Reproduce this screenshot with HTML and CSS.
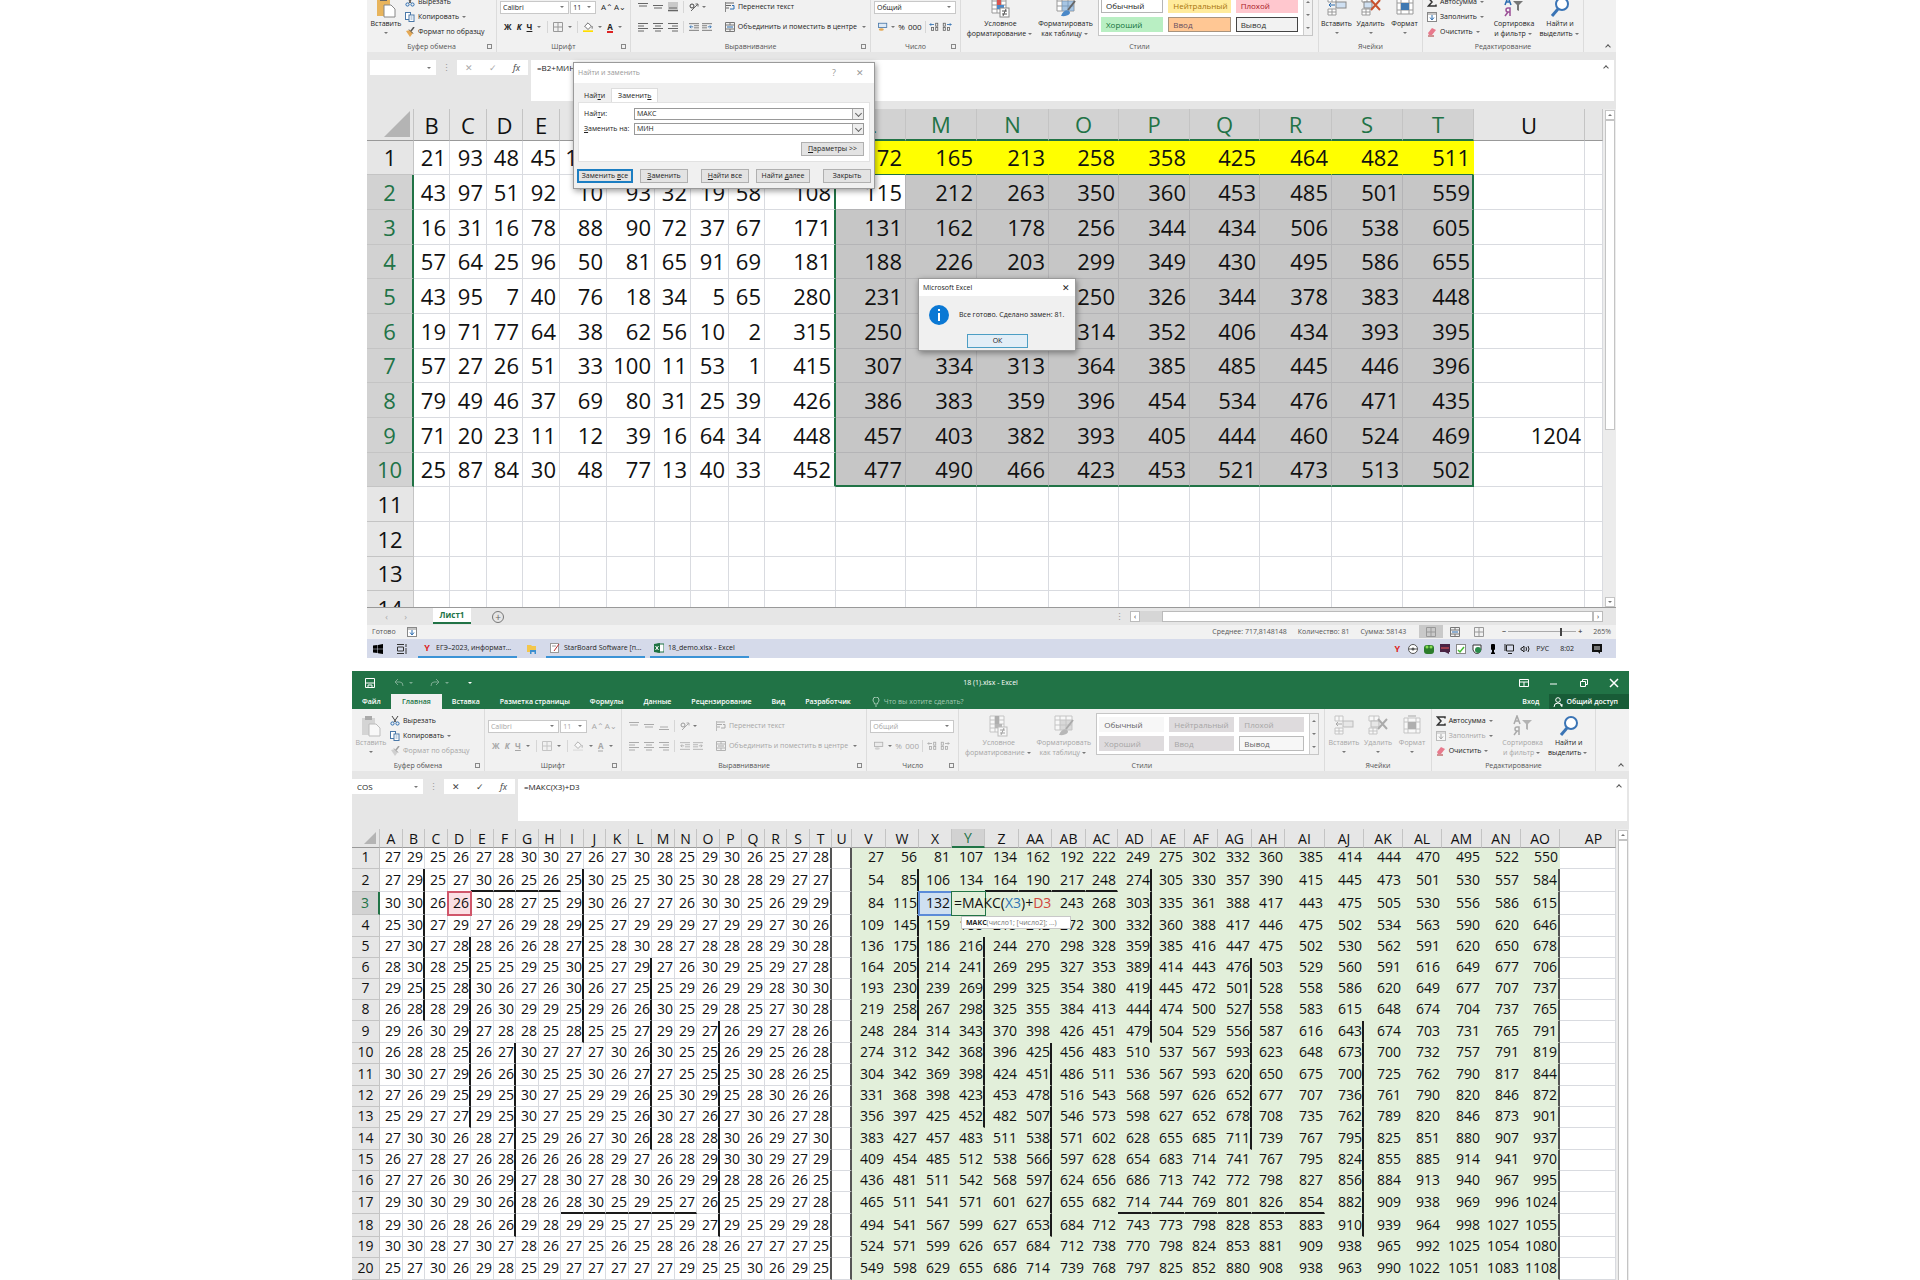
FILE: index.html
```html
<!DOCTYPE html>
<html lang="ru">
<head>
<meta charset="utf-8">
<title>18 (1).xlsx - Excel</title>
<link rel="stylesheet" href="styles.css">
</head>
<body>
<svg class="defs" aria-hidden="true">
  <symbol id="paste" viewBox="0 0 20 22"><rect x="1" y="3" width="13" height="17" fill="#e8b45c"/><rect x="4" y="1" width="7" height="4" fill="#666"/><path d="M8 9h7l4 4v8H8z" fill="#fff" stroke="#888"/></symbol>
  <symbol id="cut" viewBox="0 0 10 10"><path d="M2 0l4 6M8 0L4 6" stroke="#444" fill="none"/><circle cx="2.500" cy="7.500" r="1.600" fill="none" stroke="#2b6cb0"/><circle cx="7.500" cy="7.500" r="1.600" fill="none" stroke="#2b6cb0"/></symbol>
  <symbol id="copy" viewBox="0 0 10 10"><rect x=".5" y=".5" width="5" height="7" fill="#fff" stroke="#4a78a8"/><rect x="4" y="3" width="5" height="6.500" fill="#fff" stroke="#4a78a8"/><path d="M5.500 5h2M5.500 7h2" stroke="#4a78a8" stroke-width=".7"/></symbol>
  <symbol id="brush" viewBox="0 0 10 10"><path d="M9 0L6 4" stroke="#555" stroke-width="1.500"/><path d="M1 4l4-1 3 3-3 4z" fill="#e5a955"/><path d="M4 2.500l4 4" stroke="#555"/></symbol>
  <symbol id="left" viewBox="0 0 10 10"><path d="M0 1.500h10M0 4h6M0 6.500h10M0 9h6" stroke="#666"/></symbol>
  <symbol id="center" viewBox="0 0 10 10"><path d="M0 1.500h10M2 4h6M0 6.500h10M2 9h6" stroke="#666"/></symbol>
  <symbol id="right" viewBox="0 0 10 10"><path d="M0 1.500h10M4 4h6M0 6.500h10M4 9h6" stroke="#666"/></symbol>
  <symbol id="top" viewBox="0 0 10 10"><path d="M0 1.500h10M1 4h8" stroke="#666"/></symbol>
  <symbol id="mid" viewBox="0 0 10 10"><path d="M0 3.500h10M1 6h8" stroke="#666"/></symbol>
  <symbol id="bot" viewBox="0 0 10 10"><path d="M1 6h8M0 8.500h10" stroke="#666"/></symbol>
  <symbol id="orient" viewBox="0 0 10 10"><path d="M2 9L9 2M6.500 2H9v2.500" stroke="#666" fill="none"/><circle cx="3" cy="4" r="2" fill="none" stroke="#444"/></symbol>
  <symbol id="indent" viewBox="0 0 12 10"><path d="M0 1h12M6 3.500h6M6 6h6M0 9h12" stroke="#666"/><path d="M5 4.800H1M2.500 3L1 4.800l1.500 1.700" stroke="#2b6cb0" fill="none"/></symbol>
  <symbol id="wrap" viewBox="0 0 10 10"><path d="M0 1h9M0 3.500h6M0 6h4" stroke="#666"/><path d="M7 3.500h2V7H5" stroke="#2b6cb0" fill="none"/><path d="M.5 0v10" stroke="#888"/></symbol>
  <symbol id="merge" viewBox="0 0 10 10"><path d="M.5.5h9v9h-9zM.5 3h9M.5 7h9M5 .5V3M5 7v2.500" stroke="#777" fill="none"/><path d="M2 5h6" stroke="#2b6cb0"/></symbol>
  <symbol id="grid" viewBox="0 0 10 10"><path d="M.5.5h9v9h-9zM5 .5v9M.5 5h9" stroke="#999" fill="none"/></symbol>
  <symbol id="fill" viewBox="0 0 12 12"><path d="M2 5l4-4 4 4-4 4z" fill="#fff" stroke="#555"/><path d="M11 5v3" stroke="#555"/><rect y="10" width="12" height="2" fill="#fd0"/></symbol>
  <symbol id="money" viewBox="0 0 12 10"><rect x=".5" y=".5" width="10" height="5" fill="#dde9f5" stroke="#4a78a8"/><ellipse cx="4" cy="8" rx="3" ry="1.500" fill="#e5a955"/></symbol>
  <symbol id="dec" viewBox="0 0 12 10"><path d="M6 2H1M2.500.5L1 2l1.500 1.500" stroke="#2b6cb0" fill="none"/><rect x="8" y=".5" width="2.500" height="3.500" fill="none" stroke="#666"/><rect x="3" y="5.500" width="2.500" height="3.500" fill="none" stroke="#666"/><rect x="8" y="5.500" width="2.500" height="3.500" fill="none" stroke="#666"/></symbol>
  <symbol id="cond" viewBox="0 0 20 22"><path d="M1 1h14v16H1zM1 5h14M1 9h14M1 13h14M6 1v16M10 1v16" fill="#fff" stroke="#999"/><rect x="6" y="1" width="4" height="8" fill="#d9534f"/><rect x="6" y="9" width="7" height="4" fill="#4a88c8"/><rect x="9" y="12" width="9" height="9" fill="#fff" stroke="#888"/><path d="M11 15h5M11 18h5M15 13l-3 7" stroke="#555"/></symbol>
  <symbol id="ftable" viewBox="0 0 20 22"><path d="M1 1h17v14H1zM1 5h17M1 10h17M6 1v14M12 1v14" fill="#fff" stroke="#999"/><path d="M6 5h12v10H6z" fill="#6d9fd0" opacity=".6"/><path d="M19 5l-7 9" stroke="#666" stroke-width="2"/><path d="M5 20c2-5 5-7 8-5s-1 6-8 5z" fill="#4a88c8"/></symbol>
  <symbol id="ins" viewBox="0 0 20 20"><path d="M1 1h8v5H1zM1 13h8v6H1zM5 1v5M5 13v6M1 16h8" fill="#fff" stroke="#999"/><rect x="9" y="6" width="10" height="6" fill="#cfe0f2" stroke="#888"/><path d="M8 9H2M4 7L2 9l2 2" stroke="#2b6cb0" fill="none"/></symbol>
  <symbol id="del" viewBox="0 0 20 20"><path d="M1 1h10v5H1zM1 13h8v6H1zM6 1v5M5 13v6M1 16h8" fill="#fff" stroke="#999"/><rect x="3" y="6" width="8" height="6" fill="#cfe0f2" stroke="#888"/><path d="M10 4l9 10M19 4l-9 10" stroke="#c8502e" stroke-width="2"/></symbol>
  <symbol id="fmt" viewBox="0 0 20 20"><path d="M2 3h16v15H2zM2 7h16M2 14h16M6 3v15M14 3v15" fill="#fff" stroke="#999"/><rect x="6" y="7" width="8" height="7" fill="#3e78b2"/><path d="M6 1h8" stroke="#2b6cb0"/></symbol>
  <symbol id="sum" viewBox="0 0 10 10"><path d="M9 2.500V1H1.500L5 5 1.500 9H9V7.500" fill="none" stroke="#333" stroke-width="1.500"/></symbol>
  <symbol id="down" viewBox="0 0 10 10"><rect x=".5" y=".5" width="9" height="9" fill="#fff" stroke="#888"/><path d="M0 2h10" stroke="#888"/><path d="M5 3v4M3 5.500L5 8l2-2.500" stroke="#2b6cb0" fill="none"/></symbol>
  <symbol id="eraser" viewBox="0 0 10 10"><path d="M1 6l4-5 4 2-4 5H2z" fill="#e8798c"/><path d="M1 9h6" stroke="#a33"/></symbol>
  <symbol id="sort" viewBox="0 0 20 22"><path d="M1 9l3-8 3 8M2 6h4" fill="none" stroke="#2b6cb0" stroke-width="1.500"/><path d="M6 20v-8H4a2 2 0 000 4h2M4 16l-3 4" fill="none" stroke="#9b4f96" stroke-width="1.500"/><path d="M9 5h10l-4 4v6l-2-1V9z" fill="#777"/></symbol>
  <symbol id="find" viewBox="0 0 20 22"><circle cx="12" cy="8" r="6" fill="#fff" stroke="#3a74b5" stroke-width="2"/><path d="M8 13l-6 7" stroke="#3a74b5" stroke-width="3"/></symbol>
  <symbol id="save" viewBox="0 0 10 10"><path d="M.5.5h9v9h-9z" fill="none" stroke="#fff"/><path d="M1 5h8M3 9V7h4v2" stroke="#fff" fill="none"/></symbol>
  <symbol id="undo" viewBox="0 0 10 10"><path d="M4 1L1 4l3 3M1 4h5q3 0 3 4" fill="none" stroke="currentColor"/></symbol>
  <symbol id="win" viewBox="0 0 10 10"><path d="M0 1.500L4.500 1v3.700H0zM5 .9L10 0v4.700H5zM0 5.300h4.500V9L0 8.500zM5 5.300h5V10L5 9.200z"/></symbol>
  <symbol id="tasks" viewBox="0 0 10 10"><path d="M0 .5h7M.5 3h6v4h-6zM0 9.500h7M9 0v3M9 4v6" fill="none" stroke="#333"/></symbol>
  <symbol id="folder" viewBox="0 0 10 10"><path d="M0 1h4l1 1h4v6H0z" fill="#f3c64c"/><path d="M3 10V6h6v4H7.500V8h-3v2z" fill="#3b8fd0"/></symbol>
  <symbol id="star" viewBox="0 0 10 10"><rect x=".5" y=".5" width="8" height="9" fill="#fff" stroke="#999"/><path d="M9 1L4 8" stroke="#b33"/><path d="M2 3h4" stroke="#999"/></symbol>
  <symbol id="xl" viewBox="0 0 10 10"><rect x="4" y="1" width="6" height="8" fill="#fff" stroke="#1f7244"/><path d="M0 1l6-1v10L0 9z" fill="#1f7244"/><path d="M1.500 3l3 4M4.500 3l-3 4" stroke="#fff"/></symbol>
</svg>

<template id="ribbon-template">
  <div class="group">
    <div class="body">
      <button class="big paste"><svg><use href="#paste"/></svg>Вставить<i class="arr"></i></button>
      <div class="stack">
        <button class="on"><svg><use href="#cut"/></svg>Вырезать</button>
        <button class="on"><svg><use href="#copy"/></svg>Копировать<i class="arr"></i></button>
        <button><svg><use href="#brush"/></svg>Формат по образцу</button>
      </div>
    </div>
    <div class="caption">Буфер обмена</div><i class="launch"></i>
  </div>
  <div class="group">
    <div class="rows">
      <div class="line"><span class="pick font-pick"><select aria-label="Шрифт"><option>Calibri</option></select></span><span class="pick size-pick"><select aria-label="Размер"><option>11</option></select></span><button>A&#8963;</button><button>A&#8964;</button></div>
      <div class="line spread"><button><b>Ж</b></button><button><b><em>К</em></b></button><button><b><u>Ч</u></b></button><i class="arr"></i><i class="sep"></i><button><svg><use href="#grid"/></svg></button><i class="arr"></i><i class="sep"></i><button><svg><use href="#fill"/></svg></button><i class="arr"></i><button class="ink">A</button><i class="arr"></i></div>
    </div>
    <div class="caption">Шрифт</div><i class="launch"></i>
  </div>
  <div class="group">
    <div class="rows align">
      <div class="line"><button><svg><use href="#top"/></svg></button><button><svg><use href="#mid"/></svg></button><button class="pressed"><svg><use href="#bot"/></svg></button><i class="sep"></i><span class="slot"><button><svg><use href="#orient"/></svg></button><i class="arr"></i></span><button><svg><use href="#wrap"/></svg>Перенести текст</button></div>
      <div class="line"><button><svg><use href="#left"/></svg></button><button><svg><use href="#center"/></svg></button><button><svg><use href="#right"/></svg></button><i class="sep"></i><span class="slot"><button><svg><use href="#indent"/></svg></button><button><svg class="flip"><use href="#indent"/></svg></button></span><button><svg><use href="#merge"/></svg>Объединить и поместить в центре</button><i class="arr"></i></div>
    </div>
    <div class="caption">Выравнивание</div><i class="launch"></i>
  </div>
  <div class="group">
    <div class="rows">
      <div class="line"><span class="pick num-pick"><select aria-label="Числовой формат"><option>Общий</option></select></span></div>
      <div class="line spread"><button><svg><use href="#money"/></svg></button><i class="arr"></i><button>%</button><button>000</button><i class="sep"></i><button><svg><use href="#dec"/></svg></button><button><svg class="flip"><use href="#dec"/></svg></button></div>
    </div>
    <div class="caption">Число</div><i class="launch"></i>
  </div>
  <div class="group">
    <div class="body styles">
      <button class="big wide"><svg><use href="#cond"/></svg>Условное<span>форматирование<i class="arr"></i></span></button>
      <button class="big wide"><svg><use href="#ftable"/></svg>Форматировать<span>как таблицу<i class="arr"></i></span></button>
      <div class="gallery">
        <button class="st normal">Обычный</button><button class="st neutral">Нейтральный</button><button class="st bad">Плохой</button>
        <button class="st good">Хороший</button><button class="st input">Ввод</button><button class="st output">Вывод</button>
        <div class="updown"><i class="arr up"></i><i class="arr"></i><i class="arr"></i></div>
      </div>
    </div>
    <div class="caption">Стили</div>
  </div>
  <div class="group">
    <div class="body cells">
      <button class="big"><svg><use href="#ins"/></svg>Вставить<i class="arr"></i></button>
      <button class="big"><svg><use href="#del"/></svg>Удалить<i class="arr"></i></button>
      <button class="big"><svg><use href="#fmt"/></svg>Формат<i class="arr"></i></button>
    </div>
    <div class="caption">Ячейки</div>
  </div>
  <div class="group">
    <div class="body">
      <div class="stack edit">
        <button class="on"><svg><use href="#sum"/></svg>Автосумма<i class="arr"></i></button>
        <button><svg><use href="#down"/></svg>Заполнить<i class="arr"></i></button>
        <button class="on"><svg><use href="#eraser"/></svg>Очистить<i class="arr"></i></button>
      </div>
      <button class="big sort"><svg><use href="#sort"/></svg>Сортировка<span>и фильтр<i class="arr"></i></span></button>
      <button class="big sort on"><svg><use href="#find"/></svg>Найти и<span>выделить<i class="arr"></i></span></button>
    </div>
    <div class="caption">Редактирование</div>
  </div>
  <div class="group last"><i class="chev"></i></div>
</template>

<main>
  <section class="shot first">
    <div class="ribbon"></div>
    <div class="formula-bar">
      <span class="name-box"><input aria-label="Имя" value=""><i class="arr"></i></span>
      <i class="dots">⋮</i>
      <div class="fx"><button>✕</button><button>✓</button><button><em>fx</em></button></div>
      <div class="entry"><input aria-label="Строка формул" value="=B2+МИН"><i class="chev"></i></div>
    </div>
    <div class="grid-area tall">
      <table class="sheet large" id="sheet-a"></table>
      <div class="vscroll"><button class="cap" aria-label="Вверх"><i class="arr up"></i></button><div class="thumb"></div><button class="cap" aria-label="Вниз"><i class="arr"></i></button></div>
    </div>
    <div class="tabs-bar">
      <i class="nav">‹</i><i class="nav">›</i>
      <button class="sheet-tab">Лист1</button>
      <button class="plus" aria-label="Новый лист">+</button>
      <span class="grow"></span>
      <i class="dots">⋮</i>
      <div class="hscroll"><button aria-label="Влево">‹</button><div class="hthumb"></div><button aria-label="Вправо">›</button></div>
    </div>
    <div class="status">
      <span>Готово</span><svg><use href="#down"/></svg>
      <span class="grow"></span>
      <span>Среднее: 717,8148148</span><span>Количество: 81</span><span>Сумма: 58143</span>
      <div class="views"><button class="pressed" aria-label="Обычный"><svg><use href="#grid"/></svg></button><button aria-label="Разметка"><svg><use href="#merge"/></svg></button><button aria-label="Страничный"><svg><use href="#grid"/></svg></button></div>
      <div class="zoom"><b>−</b><input type="range" min="0" max="100" value="78" aria-label="Масштаб"><b>+</b></div>
      <span>265%</span>
    </div>
    <div class="taskbar">
      <svg><use href="#win"/></svg><svg><use href="#tasks"/></svg>
      <button class="task"><b class="ya">Y</b>ЕГЭ–2023, информат…</button>
      <svg class="mid"><use href="#folder"/></svg>
      <button class="task"><svg><use href="#star"/></svg>StarBoard Software [п…</button>
      <button class="task"><svg><use href="#xl"/></svg>18_demo.xlsx - Excel</button>
      <span class="grow"></span>
      <div class="tray">
        <b class="ya">Y</b>
        <svg viewBox="0 0 10 10"><circle cx="5" cy="5" r="4.500" fill="#fff" stroke="#555"/><path d="M1 5h8" stroke="#555"/><circle cx="5" cy="5" r="1.500" fill="#555"/></svg>
        <svg viewBox="0 0 10 10"><rect y="1" width="10" height="9" rx="3" fill="#2c7d2c"/><circle cx="3" cy="3" r="1.500" fill="#8d5"/><circle cx="7" cy="3" r="1.500" fill="#8d5"/></svg>
        <svg viewBox="0 0 10 10"><rect width="10" height="8" fill="#4a2344"/><path d="M1 4h8" stroke="#e55"/><path d="M5 8l4 2V7z" fill="#4a2344"/></svg>
        <svg viewBox="0 0 10 10"><rect x=".5" y=".5" width="9" height="9" fill="#fff" stroke="#888"/><path d="M2 6l2 2 4-5" stroke="#4b3" stroke-width="1.500" fill="none"/></svg>
        <svg viewBox="0 0 10 10"><path d="M1 1h8v5q-1 3-4 4-3-1-4-4z" fill="#fff" stroke="#333"/><circle cx="6" cy="6" r="3" fill="#2a8a4a"/></svg>
        <svg viewBox="0 0 10 10"><rect x="3" y="0" width="4" height="6" rx="1" /><path d="M5 6v4M3 9.500h4" stroke="#000" stroke-width="2"/></svg>
        <svg viewBox="0 0 10 10"><path d="M2.500 1h7v6h-7zM4 9.500h4M1 0v7" fill="none" stroke="#222"/></svg>
        <svg viewBox="0 0 10 10"><path d="M1 4h1l2-2v6L2 6H1zM6 3q1 2 0 4M8 2q2 3 0 6" fill="none" stroke="#222"/></svg>
        <span>РУС</span><span class="clock">8:02</span>
        <svg viewBox="0 0 10 10"><path d="M0 0h10v8H8v2L6 8H0z" fill="#111"/><path d="M2 3h6M2 5h6" stroke="#ddd"/></svg>
      </div>
    </div>

    <form class="dialog find">
      <div class="dialog-title"><span>Найти и заменить</span><i>?</i><i>✕</i></div>
      <div class="dialog-tabs"><button type="button">Най<u>т</u>и</button><button type="button" class="active">Заменит<u>ь</u></button></div>
      <div class="pane">
        <div class="field"><label for="what">Най<u>т</u>и:</label><span class="combo"><input id="what" value="МАКС"><i class="vee"></i></span></div>
        <div class="field"><label for="with"><u>З</u>аменить на:</label><span class="combo"><input id="with" value="МИН"><i class="vee"></i></span></div>
        <button type="button" class="btn params"><u>П</u>араметры &gt;&gt;</button>
      </div>
      <div class="dialog-buttons"><button type="button" class="btn primary">Заменить <u>в</u>се</button><button type="button" class="btn"><u>З</u>аменить</button><button type="button" class="btn"><u>Н</u>айти все</button><button type="button" class="btn">Найти <u>д</u>алее</button><button type="button" class="btn">Закрыть</button></div>
    </form>

    <div class="dialog message" role="alertdialog" aria-label="Microsoft Excel">
      <div class="dialog-title"><span>Microsoft Excel</span><i>✕</i></div>
      <div class="message-body"><svg viewBox="0 0 20 20"><circle cx="10" cy="10" r="10" fill="#0a78d4"/><path d="M10 4v2M10 8v8" stroke="#fff" stroke-width="2"/></svg><span>Все готово. Сделано замен: 81.</span></div>
      <button class="ok">ОК</button>
    </div>
  </section>

  <section class="shot second">
    <div class="titlebar">
      <div class="quick"><svg><use href="#save"/></svg><svg class="faded"><use href="#undo"/></svg><i class="arr faded"></i><svg class="faded flip"><use href="#undo"/></svg><i class="arr faded"></i><i class="arr"></i></div>
      <span>18 (1).xlsx - Excel</span>
      <div class="win-buttons">
        <svg viewBox="0 0 10 10"><path d="M.5 1.500h9v7h-9zM.5 4h9M5 4v4" fill="none" stroke="#fff"/></svg>
        <svg viewBox="0 0 10 10"><path d="M1 6h7" stroke="#fff"/></svg>
        <svg viewBox="0 0 10 10"><path d="M1.500 3.500h5v5h-5zM3.500 3V1.500h5v5H7" fill="none" stroke="#fff"/></svg>
        <svg viewBox="0 0 10 10"><path d="M1 1l8 8M9 1L1 9" stroke="#fff" stroke-width="1.500"/></svg>
      </div>
    </div>
    <nav class="menu">
      <a href="#file">Файл</a><a href="#home" class="active">Главная</a><a href="#insert">Вставка</a><a href="#layout">Разметка страницы</a><a href="#formulas">Формулы</a><a href="#data">Данные</a><a href="#review">Рецензирование</a><a href="#view">Вид</a><a href="#dev">Разработчик</a>
      <a href="#ask" class="ask"><svg viewBox="0 0 8 10"><path d="M2.500 7C2.500 5 1 5 1 3a3 3 0 016 0c0 2-1.500 2-1.500 4zM3 9h2" fill="none" stroke="currentColor"/></svg>Что вы хотите сделать?</a>
      <span class="grow"></span>
      <a href="#login">Вход</a>
      <a href="#share" class="share"><svg viewBox="0 0 10 10"><circle cx="5" cy="3" r="2.300" fill="none" stroke="#fff"/><path d="M1 10q0-4 4-4t4 4M7 8h3" fill="none" stroke="#fff"/></svg>Общий доступ</a>
    </nav>
    <div class="ribbon editing"></div>
    <div class="formula-bar">
      <span class="name-box"><input aria-label="Имя" value="COS"><i class="arr"></i></span>
      <i class="dots">⋮</i>
      <div class="fx on"><button>✕</button><button>✓</button><button><em>fx</em></button></div>
      <div class="entry"><input aria-label="Строка формул" value="=МАКС(X3)+D3"><i class="chev"></i></div>
    </div>
    <div class="grid-area">
      <table class="sheet small" id="sheet-b"></table>
      <div class="vscroll"><button class="cap" aria-label="Вверх"><i class="arr up"></i></button><div class="thumb full"></div></div>
    </div>
  </section>
</main>
<script src="sheets.js"></script>
</body>
</html>
```
FILE: styles.css
```css
* { box-sizing: border-box; }
body { margin: 0; background: #fff; color: #222; font: 7px/10px "Open Sans", "Noto Sans", sans-serif; }
button, input, select { font: inherit; color: inherit; margin: 0; padding: 0; border: 0; background: none; border-radius: 0; }
button { display: inline-flex; align-items: center; white-space: nowrap; }
input:focus, button:focus { outline: none; }
i { font-style: normal; }
a { color: inherit; text-decoration: none; }
.defs { display: none; }
svg { width: 10px; height: 10px; flex: none; }
.flip { transform: scaleX(-1); }
.grow { flex: 1; }
.arr { display: inline-block; flex: none; width: 0; height: 0; border: 2px solid transparent; border-top-color: #777; border-bottom: 0; }
.arr.up { border: 2px solid transparent; border-bottom-color: #777; border-top: 0; }
.chev { width: 4px; height: 4px; border: solid #555; border-width: 1px 0 0 1px; transform: rotate(45deg); }

main { display: grid; grid-template-columns: minmax(0, 352fr) minmax(0, 1277fr) minmax(0, 291fr); row-gap: 13px; }
.shot { grid-column: 2; min-width: 0; background: #e6e6e6; }
.first { position: relative; margin: 0 13px 0 15px; overflow: hidden; }

/* Ribbon */
.ribbon { display: grid; grid-template-columns: minmax(0, 130fr) minmax(0, 134fr) minmax(0, 240fr) minmax(0, 90fr) minmax(0, 358fr) minmax(0, 104fr) minmax(0, 161fr) minmax(0, 32fr); height: 62px; background: #f1f1f1; }
.first .ribbon { margin-top: -10px; }
.group { position: relative; border-right: 1px solid #dcdcdc; padding-top: 4px; }
.group.last { border: 0; }
.group.last .chev { position: absolute; right: 6px; bottom: 3px; }
.body { display: flex; height: 48px; }
.caption { text-align: center; line-height: 10px; color: #555; }
.launch { position: absolute; right: 4px; bottom: 3px; width: 5px; height: 5px; border: solid #888; border-width: 1px 0 0 1px; }
.launch::after { content: ""; position: absolute; right: 0; bottom: 0; width: 3px; height: 3px; border: solid #888; border-width: 0 1px 1px 0; }
.big { flex-direction: column; width: 34px; }
.big svg { width: 20px; height: 22px; margin: 2px 0 1px; }
.big .arr { margin: 3px 2px; }
.big span { display: flex; align-items: center; }
.paste { width: 38px; }
.styles { padding-left: 7px; }
.wide { width: 65px; }
.cells { justify-content: center; }
.cells .big svg { height: 20px; margin-bottom: 3px; }
.sort { width: 46px; }
.stack { display: flex; flex-direction: column; }
.stack button { height: 15px; gap: 3px; }
.edit { width: 68px; padding-left: 4px; }
.rows { height: 48px; padding: 5px 4px 0 3px; }
.line { display: flex; align-items: center; height: 20px; gap: 1px; margin-top: -2px; }
.line + .line { margin-top: 0; }
.spread { justify-content: space-between; padding: 0 4px; }
.line button { font-size: 8px; justify-content: center; }
.line .sep { width: 1px; height: 12px; background: #d6d6d6; }
.font-pick + .size-pick { margin-right: 4px; }
.pick { position: relative; display: flex; height: 13px; background: #fff; border: 1px solid #c8c8c8; }
.pick select { width: 100%; appearance: none; padding: 0 2px; line-height: 11px; }
.pick::after { content: ""; position: absolute; right: 4px; top: 4px; border: 2px solid transparent; border-top-color: #777; }
.font-pick { width: 73px; }
.size-pick { width: 27px; }
.num-pick { width: 100%; }
.ink { border-bottom: 2px solid #d22; font-weight: 700; line-height: 9px; }
.align { padding-left: 7px; }
.align .line { gap: 5px; }
.align .line button { font-size: 7px; gap: 3px; }
.slot { display: flex; align-items: center; gap: 3px; width: 31px; }
.pressed { background: #c9c9c9; }
.gallery { flex: 1; display: grid; grid-template-columns: 1fr 1fr 1fr 9px; grid-template-rows: 15px 15px; gap: 4px 5px; height: 42px; margin-right: 5px; padding: 3px 0 3px 2px; background: #fff; border: 1px solid #c6c6c6; }
.st { padding-left: 4px; border: 1px solid transparent; font-size: 8px; }
.normal { border-color: #b5b5b5; }
.neutral { background: #ffeb9c; color: #a8740c; }
.bad { background: #ffc7ce; color: #a81826; }
.good { background: #b9efc3; color: #12703a; }
.input { background: #ffc794; border-color: #a8937d; color: #6a5060; }
.output { background: #f2f2f2; border-color: #444; color: #333; }
.updown { grid-column: 4; grid-row: 1 / 3; margin: -3px 0; border-left: 1px solid #ccc; display: flex; flex-direction: column; justify-content: space-around; align-items: center; background: #f1f1f1; }
.editing button:not(.on), .editing select { color: #a6a6a6; }
.editing button:not(.on) svg { filter: grayscale(1); opacity: .5; }
.editing .pressed { background: none; }
.editing .ink { border-color: #ccc; }
.editing .neutral, .editing .bad, .editing .good, .editing .input { background: #dedbdd; border-color: #dedbdd; }
.editing .normal { background: #f7f7f7; border-color: #f7f7f7; }
.editing .output { border-color: #bbb; background: #f7f7f7; }
.editing button.normal, .editing button.output { color: #666; }

/* Formula bar */
.formula-bar { display: flex; align-items: flex-start; padding: 8px 2px 8px 3px; height: 57px; }
.name-box { display: flex; align-items: center; width: 66px; height: 15px; padding: 0 5px; background: #fff; }
.name-box input { flex: 1; min-width: 0; font-size: 8px; }
.dots { width: 21px; text-align: center; line-height: 15px; font-size: 9px; color: #999; }
.fx { display: flex; justify-content: space-around; width: 71px; height: 15px; margin-right: 3px; background: #fff; font-size: 9px; color: #aaa; }
.fx.on, .fx button:last-child { color: #444; }
.entry { flex: 1; display: flex; height: 41px; padding: 2px 6px; background: #fff; }
.entry input { flex: 1; height: 11px; font-size: 8px; line-height: 11px; }
.entry .chev { margin-top: 4px; }
.second .formula-bar { height: 58px; padding-left: 0; }
.second .name-box { width: 71px; }
.second .entry { height: 42px; }

/* Worksheets */
.grid-area { display: flex; }
.tall { height: 498px; overflow: hidden; }
.sheet { flex: 1; min-width: 0; table-layout: fixed; border-collapse: separate; border-spacing: 0; color: #111; background: #fff; }
.sheet th, .sheet td { padding: 0; border: solid #d9dbe0; border-width: 0 1px 1px 0; font-weight: 400; white-space: nowrap; }
.sheet td { text-align: right; }
.sheet tbody > tr > * { vertical-align: bottom; padding-bottom: 2px; }
.sheet th { background: #e6e6e6; text-align: center; border-color: #c4c4c4; }
.sheet thead th { border-bottom-color: #999; }
.corner { position: relative; }
.corner::after { content: ""; position: absolute; right: 3px; bottom: 3px; border: solid transparent; border-bottom-color: #b4b4b4; border-right-color: #b4b4b4; border-width: 6px; }
.large .corner::after { border-width: 13px; }
.sheet td, .sheet tbody th { height: 21px; }

.large { font-size: 22px; line-height: 30px; }
.large thead th { height: 32px; }
.large tbody td, .large tbody th { height: 35px; }
.large tbody tr:nth-child(3n+1) > * { height: 34px; }
.large td { padding-right: 3px; }
.large thead th:nth-child(n+12):nth-child(-n+20) { background: #d2d2d2; color: #217346; border-bottom: 2px solid #217346; }
.large tbody tr:nth-child(n+2):nth-child(-n+10) th { background: #d2d2d2; color: #217346; border-right: 2px solid #217346; }
.large tbody tr:nth-child(1) td:nth-child(n+12):nth-child(-n+20) { background: #ff0; border-right-color: #ff0; border-bottom-color: #217346; }
.large tbody tr:nth-child(n+2):nth-child(-n+10) td:nth-child(n+12):nth-child(-n+20) { background: #c6c6c6; border-color: #b4b4b6; }
.large tbody tr:nth-child(n+2):nth-child(-n+10) td:nth-child(11) { border-right: 2px solid #217346; }
#sheet-a tbody tr:nth-child(n+2):nth-child(-n+10) td:nth-child(20) { border-right: 2px solid #217346; padding-right: 2px; }
#sheet-a tbody tr:nth-child(10) td:nth-child(n+12):nth-child(-n+20) { border-bottom: 2px solid #217346; padding-bottom: 1px; }
#sheet-a .current { background: #fff; }

.small { font-size: 14px; line-height: 18px; }
.small thead th { height: 19px; line-height: 17px; }
.small thead th:last-child { padding-left: 12px; }
.small td { padding-right: 1px; }
.small tbody tr:nth-child(4) > *, .small tbody tr:nth-child(9) > *, .small tbody tr:nth-child(11) > *, .small tbody tr:nth-child(14) > *, .small tbody tr:nth-child(17) > *, .small tbody tr:nth-child(20) > * { height: 22px; }
.small tbody tr:nth-child(2) > *, .small tbody tr:nth-child(3) > *, .small tbody tr:nth-child(18) > * { height: 23px; }
.small td:nth-child(n+23):nth-child(-n+42) { background: #e2efda; border-color: #e2efda; }
.small td:nth-child(21), .small td:nth-child(22), #sheet-b tr:nth-child(n+2) td:nth-child(42) { border-right: 2px solid #555; }
.small thead th:nth-child(26) { background: #d2d2d2; color: #217346; border-bottom: 2px solid #217346; }
.small tbody tr:nth-child(3) th { background: #d2d2d2; color: #217346; border-right: 2px solid #217346; }
/* Walls of the maze, repeated in the sums block 21 columns to the right */
.small tbody tr:nth-child(n+2):nth-child(-n+8) td:is(:nth-child(3), :nth-child(24)),
.small tbody tr:nth-child(n+5):nth-child(-n+13) td:is(:nth-child(5), :nth-child(26)),
.small tbody tr:nth-child(n+2):nth-child(-n+9) td:is(:nth-child(10), :nth-child(31)),
.small tbody tr:nth-child(n+6):nth-child(-n+14) td:is(:nth-child(13), :nth-child(34)),
.small tbody tr:nth-child(n+10):nth-child(-n+18) td:is(:nth-child(7), :nth-child(28)),
.small tbody tr:nth-child(n+9):nth-child(-n+18) td:is(:nth-child(16), :nth-child(37)) { border-right: 2px solid #1a1a1a; padding-right: 0; }
.small tbody tr:nth-child(2) td:is(:nth-child(n+6):nth-child(-n+9), :nth-child(n+27):nth-child(-n+30)),
.small tbody tr:nth-child(17) td:is(:nth-child(n+10):nth-child(-n+15), :nth-child(n+31):nth-child(-n+36)) { border-bottom: 2px solid #1a1a1a; padding-bottom: 1px; }
#sheet-b .ref-red { background: #fbe0e4; outline: 2px solid #d0566a; outline-offset: -1px; }
#sheet-b .ref-blue { background: #cfe0f0; outline: 2px solid #5b8bd8; outline-offset: -1px; }
#sheet-b .active { position: relative; outline: 1px solid #217346; }
.formula { position: absolute; left: 2px; bottom: 2px; z-index: 1; font-weight: 500; }
.formula .x { color: #2f75b5; }
.formula .d { color: #d0473c; }
.tip { position: absolute; left: 9px; top: 24px; z-index: 2; width: 110px; padding: 0 4px; background: #fff; border: 1px solid #c8c8c8; font-size: 7px; line-height: 11px; text-align: left; color: #777; }
.tip b { color: #222; }

.vscroll { display: flex; flex-direction: column; width: 13px; padding: 1px 1px 0 2px; background: #ececec; }
.cap { justify-content: center; height: 10px; background: #fff; border: 1px solid #c4c4c4; flex: none; }
.thumb { height: 310px; background: #fff; border: 1px solid #c4c4c4; margin-bottom: auto; }
.thumb.full { flex: 1; height: auto; margin: 0; border-bottom: 0; }

/* Bottom bars */
.tabs-bar { display: flex; align-items: center; height: 18px; padding-left: 10px; border-top: 1px solid #999; }
.nav { width: 19px; text-align: center; color: #aaa; font-size: 9px; }
.sheet-tab { align-self: flex-start; justify-content: center; width: 38px; height: 16px; margin: 0 21px 0 18px; background: #fff; border-bottom: 2px solid #217346; color: #217346; font-size: 8px; font-weight: 700; }
.plus { justify-content: center; width: 12px; height: 12px; border: 1px solid #777; border-radius: 50%; font-size: 10px; color: #666; }
.hscroll { display: flex; width: 473px; height: 11px; margin-right: 13px; background: #d6d6d6; }
.hscroll button { width: 10px; justify-content: center; background: #fff; border: 1px solid #bbb; }
.hthumb { flex: 1; margin-left: 22px; background: #fff; border: 1px solid #bbb; }
.status { display: flex; align-items: center; gap: 11px; height: 14px; padding: 0 5px 1px; background: #f1f1f1; color: #555; }
.status .views { margin-left: 2px; }
.views { display: flex; height: 13px; }
.views button { width: 24px; justify-content: center; }
.zoom { display: flex; align-items: center; width: 80px; gap: 2px; }
.zoom input { flex: 1; min-width: 0; height: 10px; appearance: none; background: linear-gradient(#aaa, #aaa) center / 100% 1px no-repeat; }
.zoom input::-webkit-slider-thumb { appearance: none; width: 2px; height: 8px; background: #444; }
.taskbar { display: flex; align-items: center; height: 19px; padding: 0 14px 0 6px; background: #d5daea; color: #222; }
.taskbar > svg { margin-right: 14px; }
.taskbar > svg + svg { margin-right: 11px; }
.taskbar > .mid { margin: 0 9px 0 10px; }
.task { width: 99px; height: 19px; gap: 4px; padding: 0 4px; margin-right: 5px; border-bottom: 2px solid #3c93d6; overflow: hidden; }
.task:has(+ .mid) { margin-right: 0; }
.ya { width: 10px; color: #d22; font-size: 9px; text-align: center; }
.tray { display: flex; align-items: center; gap: 6px; }
.clock { margin: 0 12px 0 5px; }

/* Dialogs over the worksheet */
.dialog { position: absolute; background: #f0f0f0; border: 1px solid #9a9a9a; box-shadow: 1px 2px 6px rgba(0, 0, 0, .4); }
.dialog-title { display: flex; align-items: center; height: 20px; padding: 0 10px 0 4px; gap: 20px; background: #fff; }
.dialog-title span { flex: 1; }
.dialog-title i { font-size: 9px; }
.find { left: 206px; top: 62px; width: 302px; height: 127px; color: #222; }
.find .dialog-title { color: #999; }
.dialog-tabs { display: flex; align-items: flex-end; height: 19px; padding-left: 4px; }
.dialog-tabs button { height: 13px; padding: 0 6px; }
.dialog-tabs .active { height: 14px; width: 47px; justify-content: center; background: #fff; border: 1px solid #ddd; border-bottom: 0; }
.pane { margin: 0 4px; height: 60px; padding: 5px; background: #fff; border: 1px solid #e2e2e2; }
.field { display: flex; align-items: center; height: 12px; margin-bottom: 3px; }
.field label { width: 50px; white-space: nowrap; }
.combo { flex: 1; display: flex; height: 12px; border: 1px solid #999; background: #fff; }
.combo input { flex: 1; padding-left: 2px; line-height: 10px; }
.vee { width: 11px; border-left: 1px solid #aaa; background: #eee; display: flex; align-items: center; justify-content: center; }
.vee::after { content: ""; width: 4px; height: 4px; margin-top: -2px; border: solid #666; border-width: 0 1px 1px 0; transform: rotate(45deg); }
.btn { justify-content: center; height: 14px; padding: 0 6px; background: #e3e3e3; border: 1px solid #b0b0b0; white-space: pre; }
.params { display: flex; width: 63px; margin: 7px 0 0 auto; }
.dialog-buttons { display: flex; padding: 7px 3px; }
.dialog-buttons .btn { width: 48px; margin-left: 7px; padding: 0; }
.dialog-buttons .primary { width: 56px; margin-left: 0; border: 2px solid #1c7ec2; }
.dialog-buttons .btn:nth-child(3), .dialog-buttons .btn:nth-child(5) { margin-left: 13px; }
.dialog-buttons .btn:nth-child(4) { width: 54px; }
.message { left: 551px; top: 278px; width: 158px; height: 73px; }
.message .dialog-title { height: 17px; padding-right: 5px; }
.message-body { display: flex; align-items: center; gap: 10px; height: 38px; padding-left: 10px; white-space: nowrap; }
.message-body svg { width: 20px; height: 20px; }
.ok { display: flex; justify-content: center; width: 61px; height: 14px; margin: 0 0 0 48px; background: #e2eef7; border: 1px solid #4c9ec4; }

/* Title bar and menu of the second workbook */
.titlebar { display: grid; grid-template-columns: 1fr auto 1fr; align-items: center; height: 23px; background: #217346; color: #fff; }
.quick { display: flex; align-items: center; gap: 7px; padding-left: 13px; }
.quick svg:first-child { margin-right: 12px; }
.quick .arr { border-top-color: #fff; margin-right: 10px; }
.quick .arr:last-child { margin-left: 12px; }
.quick .flip + .arr { margin-right: 0; }
.quick svg + .arr { margin-left: -2px; }
.faded { opacity: .4; }
.win-buttons { display: flex; justify-content: flex-end; gap: 20px; padding-right: 10px; }
.menu { display: flex; height: 15px; background: #217346; color: #fff; line-height: 15px; font-weight: 600; white-space: nowrap; }
.menu a { padding: 0 10px; }
.menu .active { padding: 0 11px; background: #f1f1f1; color: #217346; }
.menu .ask { display: flex; align-items: center; gap: 3px; color: #a3c9b3; font-weight: 400; }
.menu .share { display: flex; align-items: center; gap: 3px; padding: 0 11px 0 4px; background: #185c37; }
```
FILE: sheets.js
```js
const letters = (from, to) => {
  const name = n => (n > 26 ? String.fromCharCode(64 + Math.floor((n - 1) / 26)) : "") + String.fromCharCode(65 + (n - 1) % 26);
  return Array.from({ length: to - from + 1 }, (_, i) => name(from + i));
};

function buildSheet(id, widths, heads, rows) {
  const cols = widths.map(w => `<col style="width:${w}px">`).join("") + "<col>";
  const head = heads.map(h => `<th scope="col">${h}</th>`).join("");
  const body = rows.map((row, i) => {
    const cells = row.split(" ");
    const tds = heads.map((_, c) => `<td>${(cells[c] || "").replace("_", "")}</td>`).join("");
    return `<tr><th scope="row">${i + 1}</th>${tds}</tr>`;
  }).join("");
  document.getElementById(id).innerHTML =
    `<colgroup>${cols}</colgroup><thead><tr><th class="corner"></th>${head}</tr></thead><tbody>${body}</tbody>`;
}

buildSheet("sheet-a",
  [47, 36, 37, 36, 37, 47, 48, 36, 38, 36, 71, 70, 71, 72, 70, 71, 70, 72, 71, 71, 111],
  [...letters(2, 21), ""],
  [
    "21 93 48 45 100 67 39 18 29 _ 72 165 213 258 358 425 464 482 511",
    "43 97 51 92 10 93 32 19 58 108 115 212 263 350 360 453 485 501 559",
    "16 31 16 78 88 90 72 37 67 171 131 162 178 256 344 434 506 538 605",
    "57 64 25 96 50 81 65 91 69 181 188 226 203 299 349 430 495 586 655",
    "43 95 7 40 76 18 34 5 65 280 231 321 210 250 326 344 378 383 448",
    "19 71 77 64 38 62 56 10 2 315 250 321 287 314 352 406 434 393 395",
    "57 27 26 51 33 100 11 53 1 415 307 334 313 364 385 485 445 446 396",
    "79 49 46 37 69 80 31 25 39 426 386 383 359 396 454 534 476 471 435",
    "71 20 23 11 12 39 16 64 34 448 457 403 382 393 405 444 460 524 469 1204",
    "25 87 84 30 48 77 13 40 33 452 477 490 466 423 453 521 473 513 502",
    "", "", "", ""
  ]);
document.querySelector("#sheet-a tbody").rows[1].cells[11].className = "current";

buildSheet("sheet-b",
  [28, 23, 22, 23, 23, 23, 22, 23, 22, 23, 22, 23, 23, 23, 22, 23, 22, 23, 22, 23, 22, 20,
    34, 33, 33, 33, 34, 33, 34, 32, 34, 33, 33, 34, 33, 40, 39, 39, 39, 40, 39, 39],
  letters(1, 42),
  [
    "27 29 25 26 27 28 30 30 27 26 27 30 28 25 29 30 26 25 27 28 _ 27 56 81 107 134 162 192 222 249 275 302 332 360 385 414 444 470 495 522 550",
    "27 29 25 27 30 26 25 26 25 30 25 25 30 25 30 28 28 29 27 27 _ 54 85 106 134 164 190 217 248 274 305 330 357 390 415 445 473 501 530 557 584",
    "30 30 26 26 30 28 27 25 29 30 26 27 27 26 30 30 25 26 29 29 _ 84 115 132 _ _ _ 243 268 303 335 361 388 417 443 475 505 530 556 586 615",
    "25 30 27 29 27 26 29 28 29 25 27 29 29 29 27 29 29 27 30 26 _ 109 145 159 188 215 242 272 300 332 360 388 417 446 475 502 534 563 590 620 646",
    "27 30 27 28 28 26 26 28 27 25 28 30 28 27 28 28 28 29 30 28 _ 136 175 186 216 244 270 298 328 359 385 416 447 475 502 530 562 591 620 650 678",
    "28 30 28 25 25 25 29 25 30 25 27 29 27 26 30 29 25 29 27 28 _ 164 205 214 241 269 295 327 353 389 414 443 476 503 529 560 591 616 649 677 706",
    "29 25 25 28 30 26 27 26 30 26 27 25 25 29 26 29 29 28 30 30 _ 193 230 239 269 299 325 354 380 419 445 472 501 528 558 586 620 649 677 707 737",
    "26 28 28 29 26 30 29 29 25 29 26 26 30 25 29 28 25 27 30 28 _ 219 258 267 298 325 355 384 413 444 474 500 527 558 583 615 648 674 704 737 765",
    "29 26 30 29 27 28 28 25 28 25 25 27 29 29 27 26 29 27 28 26 _ 248 284 314 343 370 398 426 451 479 504 529 556 587 616 643 674 703 731 765 791",
    "26 28 28 25 26 27 30 27 27 27 30 26 30 25 25 26 29 25 26 28 _ 274 312 342 368 396 425 456 483 510 537 567 593 623 648 673 700 732 757 791 819",
    "30 30 27 29 26 26 30 25 25 30 26 27 27 25 25 25 30 28 26 25 _ 304 342 369 398 424 451 486 511 536 567 593 620 650 675 700 725 762 790 817 844",
    "27 26 29 25 29 25 30 27 25 29 29 26 25 30 29 25 28 30 26 26 _ 331 368 398 423 453 478 516 543 568 597 626 652 677 707 736 761 790 820 846 872",
    "25 29 27 27 29 25 30 27 25 29 25 26 30 27 26 27 30 26 27 28 _ 356 397 425 452 482 507 546 573 598 627 652 678 708 735 762 789 820 846 873 901",
    "27 30 30 26 28 27 25 29 26 27 30 26 28 28 28 30 26 29 27 30 _ 383 427 457 483 511 538 571 602 628 655 685 711 739 767 795 825 851 880 907 937",
    "26 27 28 27 26 28 26 26 26 28 29 27 26 28 29 30 30 29 27 29 _ 409 454 485 512 538 566 597 628 654 683 714 741 767 795 824 855 885 914 941 970",
    "27 27 26 30 26 29 27 28 30 27 28 30 26 29 29 28 28 26 26 25 _ 436 481 511 542 568 597 624 656 686 713 742 772 798 827 856 884 913 940 967 995",
    "29 30 30 29 30 26 28 26 28 30 25 29 25 27 26 25 25 29 27 28 _ 465 511 541 571 601 627 655 682 714 744 769 801 826 854 882 909 938 969 996 1024",
    "29 30 26 28 26 26 29 28 29 29 25 27 25 29 27 29 25 29 29 28 _ 494 541 567 599 627 653 684 712 743 773 798 828 853 883 910 939 964 998 1027 1055",
    "30 30 28 27 30 27 28 26 27 25 26 25 28 26 28 26 27 27 27 25 _ 524 571 599 626 657 684 712 738 770 798 824 853 881 909 938 965 992 1025 1054 1080",
    "25 27 30 26 29 28 25 29 27 27 27 27 27 29 25 25 30 26 29 25 _ 549 598 629 655 686 714 739 768 797 825 852 880 908 938 963 990 1022 1051 1083 1108"
  ]);

/* The formula being typed in Y3, with its two referenced cells */
const third = document.querySelector("#sheet-b tbody").rows[2].cells;
third[4].className = "ref-red";
third[24].className = "ref-blue";
third[25].className = "active";
third[25].innerHTML = '<span class="formula">=МАКС(<span class="x">X3</span>)+<span class="d">D3</span></span><span class="tip"><b>МАКС</b>(число1; [число2]; ...)</span>';

const ribbon = document.getElementById("ribbon-template");
document.querySelectorAll(".ribbon").forEach(el => el.append(ribbon.content.cloneNode(true)));
```
